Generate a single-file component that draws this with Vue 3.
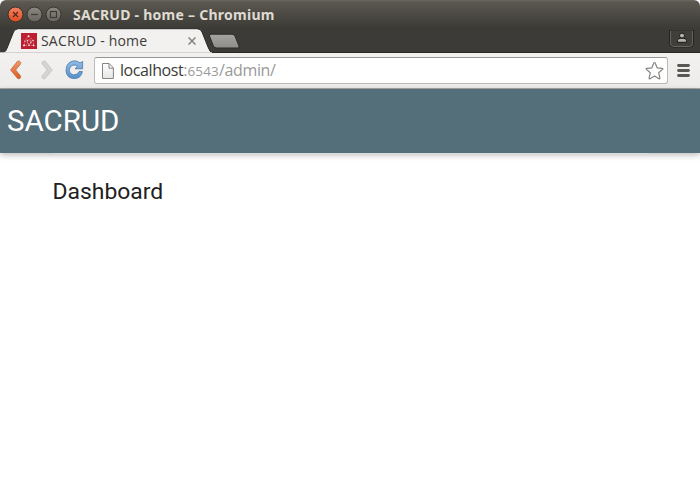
<script setup>
const windowTitle = 'SACRUD - home – Chromium'
const tabTitle = 'SACRUD - home'
</script>

<template>
  <div class="window">
    <header class="titlebar">
      <svg class="controls" width="58" height="20" viewBox="0 0 58 20">
        <defs>
          <linearGradient id="close" x2="0" y2="1"><stop stop-color="#f58361" /><stop offset="1" stop-color="#dc4c20" /></linearGradient>
          <linearGradient id="gray" x2="0" y2="1"><stop stop-color="#8c8a80" /><stop offset="1" stop-color="#66645c" /></linearGradient>
        </defs>
        <circle cx="9.5" cy="9.5" r="7.5" fill="url(#close)" stroke="#34312b" />
        <path d="M7 7l5 5m0-5l-5 5" stroke="#55271a" stroke-width="1.2" />
        <circle cx="28.5" cy="9.5" r="7.5" fill="url(#gray)" stroke="#34332e" />
        <path d="M25 9.5h7" stroke="#3c3b37" stroke-width="1.2" />
        <circle cx="47.5" cy="9.5" r="7.5" fill="url(#gray)" stroke="#34332e" />
        <rect x="44.5" y="6.5" width="6" height="6" fill="none" stroke="#3c3b37" stroke-width="1.2" />
      </svg>
      <span class="window-title">{{ windowTitle }}</span>
    </header>

    <div class="tabstrip">
      <div class="tab">
        <svg class="tab-shape" width="212" height="25" viewBox="0 0 212 25">
          <path d="M0 25C5 25 6 23 7.5 19L13.5 4Q15 .7 18.5.7H197Q200.5.7 202 4l6 15q2 5 4 6z" fill="#f2f1f0" stroke="#292824" stroke-width="1" />
          <path d="M0 24.8h212" stroke="#f2f1f0" />
        </svg>
        <svg class="favicon" width="16" height="16" viewBox="0 0 16 16">
          <path d="M0 0h16v16H0z" fill="#bd1e30" />
          <g fill="none" stroke="#e5a0a7" stroke-width=".7"><path d="M8 3.2L4 7.5l-.8 5L8 12.2l4.7.3-.7-5.2L8 3.2z" stroke-dasharray="2 1" /><circle cx="8.2" cy="8.9" r="2.1" /></g>
          <g fill="#fff"><circle cx="7.5" cy="3.2" r=".9" /><circle cx="4" cy="8" r=".6" /><circle cx="3" cy="12.4" r=".9" /><circle cx="8" cy="12.2" r=".8" /><circle cx="12.7" cy="12.5" r=".8" /><circle cx="12" cy="7.4" r=".6" /><circle cx="6.4" cy="7.6" r=".7" /><circle cx="9.8" cy="9.2" r=".6" /></g>
        </svg>
        <span class="tab-title">{{ tabTitle }}</span>
        <svg class="tab-close" width="8" height="8" viewBox="0 0 8 8"><path d="M.5.5l7 7m0-7l-7 7" stroke="#85827f" stroke-width="1.5" /></svg>
      </div>
      <svg class="new-tab" width="33" height="17" viewBox="0 0 33 17">
        <defs><linearGradient id="nt" x2="0" y2="1"><stop stop-color="#a5a4a2" /><stop offset="1" stop-color="#8e8d8a" /></linearGradient></defs>
        <path d="M3 1.2h20.5q2.7 0 3.5 2l4 10q.7 1.8-1.2 1.8H8.5q-2.3 0-3.2-2.2L1.5 3Q1 1.2 3 1.2z" fill="url(#nt)" stroke="#2b2a27" />
      </svg>
      <svg class="user" width="26" height="21" viewBox="0 0 26 21">
        <path d="M.5 2v13.5q0 3.5 3.5 3.5h17q3.5 0 3.5-3.5V2" fill="#403f3a" stroke="#24231f" stroke-width="1" />
        <path d="M1.5 2v13q0 3.5 3 3.5h16q3 0 3-3.5V2" fill="none" stroke="#66645e" />
        <path d="M1 2.5h23" stroke="#35342f" />
        <path d="M8.5 14.3v-1.6q0-2.4 3-2.4h3q3 0 3 2.4v1.6z" fill="#b5b3ae" stroke="#181714" />
        <circle cx="13" cy="7.6" r="2.5" fill="#b5b3ae" stroke="#181714" />
      </svg>
    </div>

    <div class="toolbar">
      <svg class="nav" width="84" height="25" viewBox="0 0 84 25">
        <defs>
          <linearGradient id="back" x2="0" y2="1"><stop stop-color="#f19b69" /><stop offset="1" stop-color="#df5922" /></linearGradient>
          <linearGradient id="reload" x2="0" y2="1"><stop stop-color="#91bce6" /><stop offset="1" stop-color="#5590cc" /></linearGradient>
        </defs>
        <path d="M17.5 3.2q2.2-.7 3.1 1.1.4 1-.3 2L15.6 12l4.8 5.7q.9 1.4-.3 2.6-1.4 1-2.7-.1L10.6 12z" fill="url(#back)" stroke="#b76c43" stroke-width=".8" />
        <path d="M45.2 3.2q-2.2-.7-3.1 1.1-.4 1 .3 2L47.2 12l-4.9 5.7q-.9 1.4.3 2.6 1.4 1 2.7-.1L52.2 12z" fill="#d6d4d2" stroke="#bdbbb8" stroke-width=".7" />
        <path d="M82.6 4v7.3H75l2.6-2.5q-2.2-1.9-4.8-1.1Q69.1 9 69.2 13q.4 4 4.6 4.4 3.9.1 5.2-3.3h3.4q-1.2 6.8-8 7-7.8-.2-8.4-7.9.1-8 6.8-9.7 4-.8 7.2 1.9z" transform="translate(0 -.5)" fill="url(#reload)" stroke="#4879aa" stroke-width=".8" />
      </svg>
      <div class="address">
        <svg class="page-icon" width="12" height="16" viewBox="0 0 12 16">
          <defs><linearGradient id="paper" x2="0" y2="1"><stop stop-color="#fff" /><stop offset="1" stop-color="#e5e5e4" /></linearGradient></defs>
          <path d="M.5.5h6.7l4.2 4.3v10.7H.5z" fill="url(#paper)" stroke="#858583" />
          <path d="M7 .8v4.4h4.2" fill="none" stroke="#858583" />
        </svg>
        <span class="url"><span class="host">localhost</span><span class="colon">:</span><span class="port">6543</span><span class="path">/admin/</span></span>
        <svg class="star" width="20" height="20" viewBox="0 0 20 20"><path d="M10.5 1.5q.5 0 .8.8l1.9 4.6 4.9.4q1.3.2.4 1.1l-3.8 3.4 1.2 5.1q.1 1.3-.9.8l-4.5-2.8-4.5 2.8q-1 .5-.9-.8l1.2-5.1-3.8-3.4q-.9-.9.4-1.1l4.9-.4 1.9-4.6q.3-.8.8-.8z" fill="#fff" stroke="#858483" stroke-width="1.2" stroke-linejoin="round" /></svg>
      </div>
      <svg class="menu" width="13" height="13" viewBox="0 0 13 13"><path d="M1.5 1.5h10M1.5 6.5h10M1.5 11.5h10" stroke="#5a5855" stroke-width="2.8" stroke-linecap="round" /></svg>
    </div>

    <main class="page">
      <div class="navbar"><span class="brand">SACRUD</span></div>
      <div class="container">
        <h1>Dashboard</h1>
      </div>
    </main>
  </div>
</template>

<style>
body { margin: 0; background: #fff; }
</style>

<style scoped>
.window { width: 700px; height: 479px; overflow: hidden; display: flex; flex-direction: column; background: #fff; font-family: "Open Sans", sans-serif; white-space: nowrap; }
.titlebar { height: 28px; flex: none; box-sizing: border-box; display: flex; align-items: center; padding: 1px 6px 0; background: linear-gradient(#6b6961 0, #5b5850 2px, #3d3c37 27px); border-radius: 6px 6px 0 0; }
.controls { flex: none; }
.window-title { margin-left: 9px; font: bold 14px/20px "Noto Sans", sans-serif; letter-spacing: .26px; color: #dfdbd2; padding-top: 1px; }
.tabstrip { height: 25px; flex: none; display: flex; background: #3c3b37; box-shadow: inset 0 -1px #292824; }
.tab { width: 212px; height: 25px; flex: none; display: flex; align-items: center; position: relative; }
.tab-shape { position: absolute; left: 0; top: 0; }
.favicon { position: relative; margin-left: 21px; flex: none; }
.tab-title { position: relative; margin-left: 4px; width: 147px; font-size: 14px; line-height: 20px; color: #3c3b38; letter-spacing: .18px; }
.tab-close { position: relative; flex: none; margin-right: 16px; }
.new-tab { margin: 5px 0 0 -4px; flex: none; position: relative; }
.user { margin: 0 5px 0 auto; flex: none; }
.toolbar { height: 36px; flex: none; box-sizing: border-box; display: flex; align-items: center; background: linear-gradient(#f2f1f0, #eeecea); border-bottom: 1px solid #aaa7a3; }
.nav { flex: none; margin-right: 10px; }
.address { box-sizing: border-box; width: 574px; height: 27px; flex: none; display: flex; align-items: center; padding: 0 3px 0 7px; background: #fff; border: 1px solid #bdbbb8; border-top-color: #989693; border-radius: 3px; }
.page-icon { flex: none; }
.url { display: flex; align-items: baseline; margin-left: 6px; font-size: 16px; line-height: 22px; color: #999; }
.host { color: #3c3b38; letter-spacing: -.42px; }
.port { font-size: 13.5px; letter-spacing: .15px; }
.path { letter-spacing: -.35px; }
.star { margin-left: auto; flex: none; }
.menu { margin-left: 9px; flex: none; }
.page { flex: 1; font-family: Roboto, sans-serif; }
.navbar { height: 64px; display: flex; align-items: center; padding-left: 7px; background: #546e7a; box-shadow: 0 2px 5px rgba(0,0,0,.16), 0 2px 8px rgba(0,0,0,.12); }
.brand { font-size: 29.5px; line-height: 64px; color: #fff; }
.container { width: 595px; margin: 0 auto; border-top: 1px solid #dadddf; position: relative; }
h1 { margin: 0; padding-top: 23px; font-size: 22.9px; line-height: 30px; font-weight: 400; color: #212121; }
</style>
